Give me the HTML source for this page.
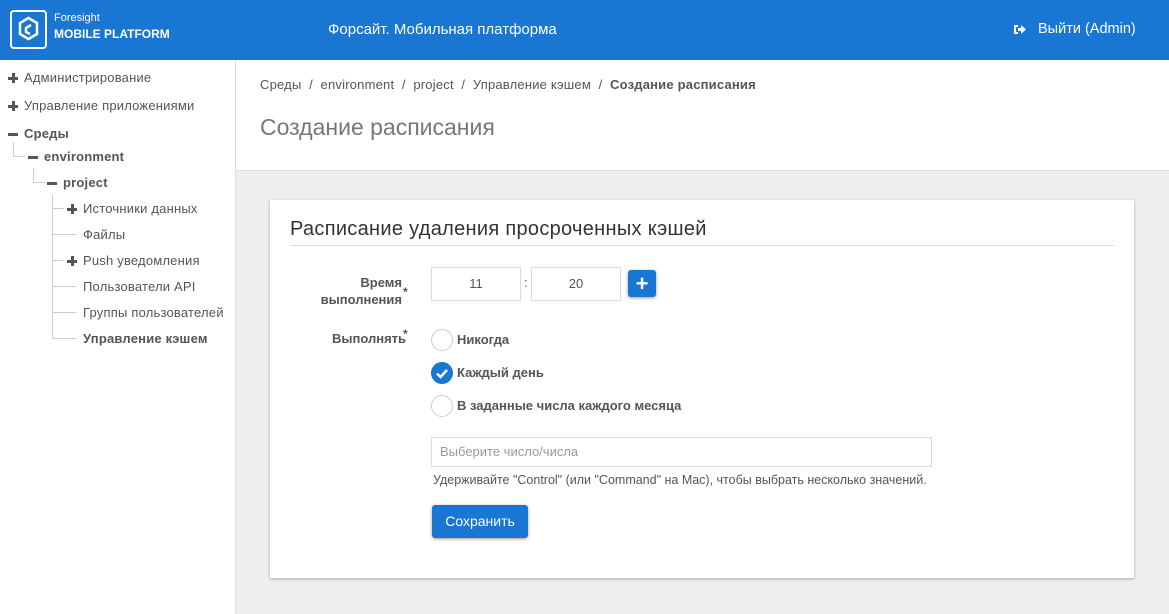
<!DOCTYPE html>
<html><head><meta charset="utf-8"><style>
*{box-sizing:border-box;margin:0;padding:0}
body{width:1169px;height:614px;overflow:hidden;font-family:"Liberation Sans",sans-serif;background:#eeeeee;position:relative;color:#555}
.top{position:absolute;left:0;top:0;width:1169px;height:60px;background:#1976d2;color:#fff}
.abs{position:absolute}
.side{position:absolute;left:0;top:60px;width:236px;height:554px;background:#fff;border-right:1px solid #ddd;font-size:13px;color:#555;letter-spacing:0.2px}
.side div{position:absolute;white-space:nowrap}
.b{font-weight:bold}
.ln{position:absolute;background:#ccc}
.pl{position:absolute;width:10px;height:10px}
.pl:before{content:"";position:absolute;left:0;top:4px;width:10px;height:2.5px;background:#555}
.pl.p:after{content:"";position:absolute;left:4px;top:0;width:2.5px;height:10px;background:#555}
.hdr{position:absolute;left:236px;top:60px;width:933px;height:111px;background:#fff;border-bottom:1px solid #ddd}
.card{position:absolute;left:270px;top:200px;width:864px;height:378px;background:#fff;box-shadow:0 1px 3px rgba(0,0,0,.3)}
.inp{position:absolute;border:1px solid #ddd;background:#fff;font-size:13px;color:#555;text-align:center;line-height:32px}
.rad{position:absolute;width:22px;height:22px;border:1px solid #ccc;border-radius:50%;background:#fff}
.lbl{position:absolute;font-size:13px;font-weight:bold;color:#555;white-space:nowrap}
</style></head><body>
<div class="top">
 <svg class="abs" style="left:10px;top:10px" width="37" height="39" viewBox="0 0 37 39"><rect x="1" y="1" width="35" height="37" rx="3" fill="none" stroke="#fff" stroke-width="2"/><path d="M18.5 8 L27 13 V24 L18.5 29 L10 24 V13 Z" fill="none" stroke="#fff" stroke-width="2.5"/><path d="M21 15 L16 18 V22 L20 24" fill="none" stroke="#fff" stroke-width="2.5"/></svg>
 <div class="abs" style="left:54px;top:12px;font-size:11px">Foresight</div>
 <div class="abs" style="left:54px;top:27px;font-size:12px;font-weight:bold">MOBILE PLATFORM</div>
 <div class="abs" style="left:328px;top:21px;font-size:15px">Форсайт. Мобильная платформа</div>
 <svg class="abs" style="left:1013px;top:24px" width="13" height="11" viewBox="0 0 13 11"><path d="M1 1h4v2H3v5h2v2H1z M5 4h3V1l5 4.5L8 10V7H5z" fill="#fff"/></svg>
 <div class="abs" style="left:1038px;top:21px;font-size:14.5px">Выйти (Admin)</div>
</div>
<div class="side">
 <span class="pl p" style="left:8px;top:13px"></span><div style="left:24px;top:10px">Администрирование</div>
 <span class="pl p" style="left:8px;top:41px"></span><div style="left:24px;top:38px">Управление приложениями</div>
 <span class="pl" style="left:8px;top:69px"></span><div class="b" style="left:24px;top:66px">Среды</div>
 <div class="ln" style="left:13px;top:82px;width:1px;height:14px"></div><div class="ln" style="left:13px;top:96px;width:12px;height:1px"></div>
 <span class="pl" style="left:28px;top:92px"></span><div class="b" style="left:44px;top:89px">environment</div>
 <div class="ln" style="left:33px;top:108px;width:1px;height:14px"></div><div class="ln" style="left:33px;top:122px;width:12px;height:1px"></div>
 <span class="pl" style="left:47px;top:118px"></span><div class="b" style="left:63px;top:115px">project</div>
 <div class="ln" style="left:52px;top:135px;width:1px;height:144px"></div>
 <div class="ln" style="left:52px;top:148px;width:12px;height:1px"></div>
 <span class="pl p" style="left:67px;top:144px"></span><div style="left:83px;top:141px">Источники данных</div>
 <div class="ln" style="left:52px;top:174px;width:24px;height:1px"></div>
 <div style="left:83px;top:167px">Файлы</div>
 <div class="ln" style="left:52px;top:200px;width:12px;height:1px"></div>
 <span class="pl p" style="left:67px;top:196px"></span><div style="left:83px;top:193px">Push уведомления</div>
 <div class="ln" style="left:52px;top:226px;width:24px;height:1px"></div>
 <div style="left:83px;top:219px">Пользователи API</div>
 <div class="ln" style="left:52px;top:252px;width:24px;height:1px"></div>
 <div style="left:83px;top:245px">Группы пользователей</div>
 <div class="ln" style="left:52px;top:278px;width:24px;height:1px"></div>
 <div class="b" style="left:83px;top:271px">Управление кэшем</div>
</div>
<div class="hdr">
 <div class="abs" style="left:24px;top:17px;font-size:13px;color:#555;white-space:nowrap;letter-spacing:0.2px">Среды &nbsp;/&nbsp; environment &nbsp;/&nbsp; project &nbsp;/&nbsp; Управление кэшем &nbsp;/&nbsp; <b>Создание расписания</b></div>
 <div class="abs" style="left:24px;top:54px;font-size:23px;color:#777">Создание расписания</div>
</div>
<div class="card">
 <div class="abs" style="left:20px;top:18px;font-size:20px;color:#333;letter-spacing:0.3px">Расписание удаления просроченных кэшей</div>
 <div class="abs" style="left:20px;top:45px;width:824px;height:1px;background:#ddd"></div>
 <div class="lbl" style="right:732px;top:74px;text-align:right;line-height:17px">Время<br>выполнения</div><div class="abs" style="left:133px;top:85px;font-size:12px;font-weight:bold">*</div>
 <div class="inp" style="left:161px;top:67px;width:90px;height:34px">11</div>
 <div class="abs" style="left:254px;top:75px;font-size:13px">:</div>
 <div class="inp" style="left:261px;top:67px;width:90px;height:34px">20</div>
 <div class="abs" style="left:358px;top:70px;width:28px;height:27px;background:#1976d2;border-radius:3px;box-shadow:0 1px 3px rgba(0,0,0,.4);color:#fff;text-align:center;font-size:22px;line-height:27px;font-weight:bold">+</div>
 <div class="lbl" style="left:62px;top:131px">Выполнять</div><div class="abs" style="left:133px;top:127px;font-size:12px;font-weight:bold">*</div>
 <div class="rad" style="left:161px;top:129px"></div><div class="lbl" style="left:187px;top:132px">Никогда</div>
 <div class="rad" style="left:161px;top:162px;background:#1976d2;border-color:#1976d2"><svg width="20" height="20" viewBox="0 0 20 20"><path d="M5 10.5l3.5 3.5 6.5-7" stroke="#fff" stroke-width="2.5" fill="none"/></svg></div><div class="lbl" style="left:187px;top:165px">Каждый день</div>
 <div class="rad" style="left:161px;top:195px"></div><div class="lbl" style="left:187px;top:198px">В заданные числа каждого месяца</div>
 <div class="inp" style="left:161px;top:237px;width:501px;height:30px;text-align:left;padding-left:8px;line-height:28px;color:#999">Выберите число/числа</div>
 <div class="abs" style="left:163px;top:273px;font-size:12.5px;color:#555">Удерживайте "Control" (или "Command" на Mac), чтобы выбрать несколько значений.</div>
 <div class="abs" style="left:162px;top:305px;width:96px;height:33px;background:#1976d2;border-radius:3px;box-shadow:0 1px 3px rgba(0,0,0,.4);color:#fff;text-align:center;line-height:33px;font-size:14px">Сохранить</div>
</div>
</body></html>
